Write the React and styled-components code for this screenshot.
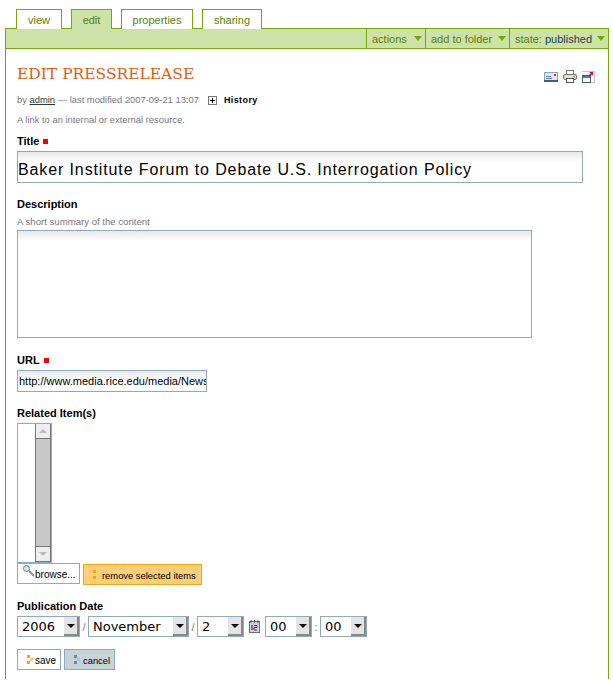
import React from 'react';
import styled, { createGlobalStyle } from 'styled-components';

const GlobalStyle = createGlobalStyle`
  html, body {
    margin: 0;
    padding: 0;
    background: #fff;
  }
  body {
    font-family: "Liberation Sans", Arial, sans-serif;
    color: #000;
  }
`;

const App = () => {
  return (
    <Page>
      <GlobalStyle />
      <Tabs>
        <Tab $width={46}>view</Tab>
        <Tab $active $width={41}>edit</Tab>
        <Tab $width={72}>properties</Tab>
        <Tab $width={60}>sharing</Tab>
      </Tabs>
      <Panel>
        <ActionBar>
          <ActionItem $width={59}>
            actions <Caret />
          </ActionItem>
          <ActionItem $width={84}>
            add to folder <Caret />
          </ActionItem>
          <ActionItem $width={99}>
            <span>
              state: <StateValue>published</StateValue>
            </span>
            <Caret />
          </ActionItem>
        </ActionBar>
        <Content>
          <HeadingRow>
            <Heading>EDIT PRESSRELEASE</Heading>
            <DocIcons>
              <MailIcon />
              <PrintIcon />
              <FullIcon />
            </DocIcons>
          </HeadingRow>
          <Byline>
            <span>
              by <AuthorLink>admin</AuthorLink> — last modified 2007-09-21 13:07
            </span>
            <PlusBox>
              <PlusIcon />
            </PlusBox>
            <HistoryLabel>History</HistoryLabel>
          </Byline>
          <Intro>A link to an internal or external resource.</Intro>

          <Label>
            Title <Required />
          </Label>
          <TitleInput readOnly value="Baker Institute Forum to Debate U.S. Interrogation Policy" />

          <Label $top={15}>Description</Label>
          <Help>A short summary of the content</Help>
          <DescriptionArea readOnly />

          <Label $top={16}>
            URL <Required />
          </Label>
          <UrlInput readOnly value="http://www.media.rice.edu/media/NewsBot/NewsRelease.asp" />

          <Label $top={15}>Related Item(s)</Label>
          <ListBox>
            <ScrollBar>
              <ScrollEnd>
                <ScrollArrow />
              </ScrollEnd>
              <ScrollTrack />
              <ScrollEnd>
                <ScrollArrow $down />
              </ScrollEnd>
            </ScrollBar>
          </ListBox>
          <ButtonRow>
            <BrowseButton>
              <SearchIcon />
              <ButtonText>browse...</ButtonText>
            </BrowseButton>
            <RemoveButton>
              <Bullet $color="#ffa500" $light="#ffce7b" />
              <ButtonText>remove selected items</ButtonText>
            </RemoveButton>
          </ButtonRow>

          <Label $top={15}>Publication Date</Label>
          <DateRow>
            <DropDown $width={63} value="2006" />
            <Sep>/</Sep>
            <DropDown $width={101} value="November" />
            <Sep>/</Sep>
            <DropDown $width={47} value="2" />
            <CalendarIcon />
            <DropDown $width={47} value="00" />
            <Sep>:</Sep>
            <DropDown $width={47} value="00" />
          </DateRow>
          <FormActions>
            <SaveButton>
              <Bullet $color="#ffa500" $light="#ffce7b" />
              <ButtonText>save</ButtonText>
            </SaveButton>
            <CancelButton>
              <Bullet $color="#5f8fa8" $light="#aec4d0" />
              <ButtonText>cancel</ButtonText>
            </CancelButton>
          </FormActions>
        </Content>
      </Panel>
    </Page>
  );
};

const DropDown = ({ $width, value }) => (
  <SelectBox $width={$width}>
    <SelectValue>{value}</SelectValue>
    <SelectButton>
      <SelectArrow />
    </SelectButton>
  </SelectBox>
);

const MailIcon = () => (
  <svg width="14" height="10" viewBox="0 0 14 10">
    <rect x="0.5" y="0.5" width="13" height="8" fill="#dfe8f2" stroke="#8fa3b8" />
    <rect x="0" y="8" width="14" height="2" fill="#50586a" />
    <rect x="10" y="2" width="2" height="2" fill="#e33" />
    <path d="M2 4.500h5M2 6.500h6" stroke="#4f86c6" strokeWidth="1" />
  </svg>
);

const PrintIcon = () => (
  <svg width="14" height="13" viewBox="0 0 14 13">
    <rect x="3.5" y="0.5" width="7" height="4" fill="#fff" stroke="#777" />
    <rect x="0.5" y="4.5" width="13" height="5" rx="1.5" fill="#e6dfc8" stroke="#777" />
    <rect x="3.5" y="8.5" width="7" height="4" fill="#fff" stroke="#555" />
    <rect x="10" y="6" width="2" height="1" fill="#d84" />
  </svg>
);

const FullIcon = () => (
  <svg width="13" height="12" viewBox="0 0 13 12">
    <path d="M0.5 0.5H12.5V11.5H7" fill="none" stroke="#888" strokeDasharray="1 1" />
    <rect x="0.5" y="4.5" width="8" height="7" fill="#fff" stroke="#4a5a70" />
    <rect x="1" y="5" width="7" height="2" fill="#3f7fc0" />
    <path d="M7 1h4v4L10 3.500 8 5.500 6.800 4.200 8.800 2.200z" fill="#e00020" />
  </svg>
);

const PlusIcon = () => (
  <svg width="7" height="7" viewBox="0 0 7 7">
    <path d="M1 3.500h5M3.500 1v5" stroke="#000" strokeWidth="1" />
  </svg>
);

const SearchIcon = () => (
  <SearchWrap>
    <svg width="12" height="12" viewBox="0 0 12 12">
      <circle cx="3.500" cy="3.500" r="3" fill="#dbe9f6" stroke="#5d7ea8" />
      <path d="M6 6l5 5" stroke="#b9822f" strokeWidth="1.800" />
    </svg>
  </SearchWrap>
);

const CalendarIcon = () => (
  <CalendarWrap>
    <svg width="11" height="13" viewBox="0 0 11 13">
      <rect x="0.5" y="1.5" width="10" height="11" fill="#c9d3e6" stroke="#6a6f84" />
      <path d="M2 0v3M5.500 0v3M9 0v3" stroke="#555" />
      <path d="M3 5v5" stroke="#8a2038" strokeWidth="1.200" />
      <path d="M5 5.500h3v2h-3v2.500h3" fill="none" stroke="#8a2038" strokeWidth="1" />
    </svg>
  </CalendarWrap>
);

const uiFont = `"Liberation Sans", Arial, sans-serif`;

const Page = styled.div`
  width: 613px;
  height: 680px;
  overflow: hidden;
  padding: 9px 5px 0;
  box-sizing: border-box;
`;

const Tabs = styled.div`
  display: flex;
  gap: 9px;
  padding-left: 11px;
  height: 20px;
`;

const Tab = styled.div`
  box-sizing: border-box;
  width: ${(p) => p.$width}px;
  height: 20px;
  border: 1px solid #76a900;
  border-bottom: none;
  background: ${(p) => (p.$active ? '#cde2a7' : '#fff')};
  color: #578308;
  font-family: ${uiFont};
  font-size: 11px;
  text-align: center;
  line-height: 21px;
`;

const Panel = styled.div`
  box-sizing: border-box;
  width: 604px;
  height: 651px;
  margin-top: -1px;
  border: 1px solid #76a900;
  border-bottom: none;
`;

const ActionBar = styled.div`
  display: flex;
  justify-content: flex-end;
  height: 19px;
  background: #cde2a7;
  border-bottom: 1px solid #76a900;
`;

const ActionItem = styled.div`
  box-sizing: border-box;
  width: ${(p) => p.$width}px;
  display: flex;
  align-items: center;
  justify-content: space-between;
  padding: 0 3px 0 5px;
  border-left: 1px solid #76a900;
  color: #578308;
  font-family: ${uiFont};
  font-size: 11px;
  white-space: nowrap;
`;

const StateValue = styled.span`
  color: #1f3f4f;
`;

const Caret = styled.span`
  width: 0;
  height: 0;
  border-left: 4px solid transparent;
  border-right: 4px solid transparent;
  border-top: 5px solid #76a900;
`;

const Content = styled.div`
  padding: 0 11px;
`;

const HeadingRow = styled.div`
  display: flex;
  justify-content: space-between;
  align-items: flex-start;
  padding-top: 16px;
  height: 28px;
`;

const Heading = styled.h1`
  margin: 0;
  font-family: "DejaVu Serif", serif;
  font-size: 15.500px;
  font-weight: normal;
  line-height: 18px;
  color: #e8590c;
`;

const DocIcons = styled.div`
  display: flex;
  align-items: center;
  gap: 5px;
  margin: 5px 2px 0 0;
`;

const Byline = styled.div`
  display: flex;
  align-items: center;
  height: 12px;
  font-size: 9.400px;
  color: #76797c;
`;

const AuthorLink = styled.span`
  color: #1f3f3f;
  text-decoration: underline;
`;

const PlusBox = styled.span`
  box-sizing: border-box;
  display: flex;
  width: 9px;
  height: 9px;
  margin: 2px 7px 0 9px;
  border: 1px solid #777;
`;

const HistoryLabel = styled.span`
  margin-top: 2px;
  color: #000;
  font-size: 9px;
  font-weight: bold;
  letter-spacing: 0.400px;
`;

const Intro = styled.div`
  margin-top: 9px;
  height: 12px;
  font-size: 9.400px;
  line-height: 12px;
  color: #76797c;
`;

const Label = styled.div`
  display: flex;
  align-items: center;
  gap: 4px;
  height: 12px;
  margin-top: ${(p) => p.$top || 9}px;
  font-size: 11px;
  font-weight: bold;
  line-height: 12px;
`;

const Required = styled.span`
  width: 5px;
  height: 5px;
  background: #f00;
`;

const fieldStyle = `
  display: block;
  box-sizing: border-box;
  padding: 0;
  border: 1px solid #8cacbb;
  border-radius: 0;
  outline: none;
  background: linear-gradient(#e8e8e8, #fff 10px);
  color: #000;
  font-family: ${uiFont};
`;

const TitleInput = styled.input`
  ${fieldStyle}
  width: 566px;
  height: 32px;
  margin-top: 4px;
  padding-top: 5px;
  font-size: 16px;
  letter-spacing: 0.880px;
`;

const Help = styled.div`
  margin-top: 6px;
  height: 12px;
  font-size: 9.600px;
  line-height: 12px;
  color: #76797c;
`;

const DescriptionArea = styled.textarea`
  ${fieldStyle}
  width: 515px;
  height: 108px;
  margin-top: 2px;
  resize: none;
`;

const UrlInput = styled.input`
  ${fieldStyle}
  width: 190px;
  height: 22px;
  margin-top: 4px;
  padding-left: 1px;
  font-size: 11px;
`;

const ListBox = styled.div`
  box-sizing: border-box;
  display: flex;
  justify-content: flex-end;
  width: 35px;
  height: 140px;
  margin-top: 4px;
  border: 1px solid #8cacbb;
  background: #fff;
`;

const ScrollBar = styled.div`
  display: flex;
  flex-direction: column;
  width: 16px;
  border-left: 1px solid #777;
  border-right: 1px solid #777;
  border-bottom: 1px solid #777;
  box-sizing: border-box;
`;

const ScrollEnd = styled.div`
  display: flex;
  align-items: center;
  justify-content: center;
  height: 14px;
  background: #eee;
  flex: none;
`;

const ScrollArrow = styled.span`
  width: 0;
  height: 0;
  border-left: 4px solid transparent;
  border-right: 4px solid transparent;
  ${(p) => (p.$down ? 'border-top: 4px solid #bbb;' : 'border-bottom: 4px solid #bbb;')}
`;

const ScrollTrack = styled.div`
  flex: 1;
  background: #c8c8c8;
  border-top: 1px solid #777;
  border-bottom: 1px solid #777;
`;

const ButtonRow = styled.div`
  display: flex;
  align-items: flex-start;
  gap: 3px;
`;

const FormButton = styled.div`
  box-sizing: border-box;
  display: flex;
  align-items: center;
  height: 21px;
  border: 1px solid #8cacbb;
  background: #fff;
  font-size: 10px;
  color: #000;
  white-space: nowrap;
`;

const ButtonText = styled.span`
  padding-top: 2px;
`;

const SearchWrap = styled.span`
  display: flex;
  margin-top: -5px;
`;

const BrowseButton = styled(FormButton)`
  width: 63px;
  padding-left: 5px;
`;

const RemoveButton = styled(FormButton)`
  width: 119px;
  margin-top: 1px;
  padding-left: 9px;
  gap: 3px;
  border-color: #ffa500;
  background: #ffce7b;
  font-size: 9.400px;
`;

const Bullet = styled.span`
  flex: none;
  width: 6px;
  height: 9px;
  margin-top: -1px;
  background:
    linear-gradient(${(p) => p.$color}, ${(p) => p.$color}) left top / 3px 3px no-repeat,
    linear-gradient(${(p) => p.$color}, ${(p) => p.$color}) left bottom / 3px 3px no-repeat,
    linear-gradient(${(p) => p.$light}, ${(p) => p.$light}) right center / 3px 3px no-repeat;
`;

const DateRow = styled.div`
  display: flex;
  align-items: center;
  margin-top: 4px;
  height: 21px;
`;

const SelectBox = styled.div`
  box-sizing: border-box;
  display: flex;
  justify-content: space-between;
  align-items: stretch;
  width: ${(p) => p.$width}px;
  height: 21px;
  border: 1px solid #8cacbb;
  background: #fff;
`;

const SelectValue = styled.span`
  padding-left: 4px;
  font-family: "DejaVu Sans", sans-serif;
  font-size: 13px;
  line-height: 19px;
`;

const SelectButton = styled.span`
  display: flex;
  align-items: center;
  justify-content: center;
  width: 15px;
  background: #e4e4e4;
  border-right: 2px solid #888;
  border-bottom: 2px solid #888;
  box-sizing: border-box;
`;

const SelectArrow = styled.span`
  width: 0;
  height: 0;
  border-left: 4px solid transparent;
  border-right: 4px solid transparent;
  border-top: 4px solid #000;
`;

const Sep = styled.span`
  width: 8px;
  text-align: center;
  font-size: 11px;
  color: #76797c;
`;

const CalendarWrap = styled.span`
  display: flex;
  margin: 0 5px;
`;

const FormActions = styled.div`
  display: flex;
  gap: 3px;
  margin-top: 12px;
`;

const SaveButton = styled(FormButton)`
  width: 44px;
  padding-left: 9px;
  gap: 2px;
`;

const CancelButton = styled(FormButton)`
  width: 51px;
  padding-left: 9px;
  gap: 3px;
  background: #c8d3d6;
  font-size: 9.400px;
`;

export default App;
